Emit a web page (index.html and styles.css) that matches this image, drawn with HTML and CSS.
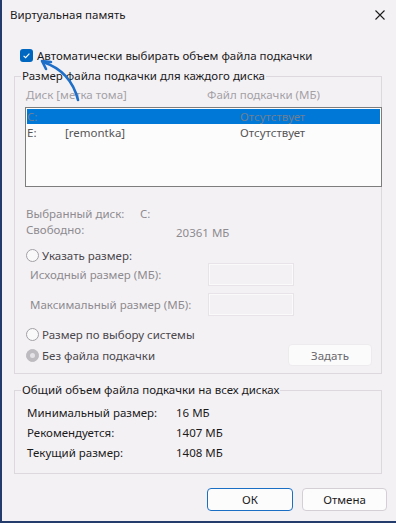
FILE: index.html
```html
<html lang="ru">
<head>
    <meta charset="UTF-8">
    <title>Виртуальная память</title>
    <link rel="stylesheet" href="styles.css">
</head>
<body>

    <div class="window">
        <!-- Title bar -->
        <div class="titlebar">
            <span class="title">Виртуальная память</span>
            <svg class="close" width="10" height="10" viewBox="0 0 10 10">
                <path d="M0.5 0.5 L9.5 9.5 M9.5 0.5 L0.5 9.5" stroke="#1b1b1b" stroke-width="1.1" fill="none"/>
            </svg>
        </div>

        <div class="content">
            <div class="auto-row">
                <span class="checkbox">
                    <svg width="13" height="13" viewBox="0 0 13 13">
                        <path d="M3.6 6.8 L5.6 8.7 L9.4 4.6" stroke="#fff" stroke-width="1.1" fill="none"/>
                    </svg>
                </span>
                <span>Автоматически выбирать объем файла подкачки</span>
            </div>

            <!-- Per-disk group -->
            <fieldset class="group group-disk">
                <legend>Размер файла подкачки для каждого диска</legend>

                <div class="list-head">
                    <span class="col-disk">Диск [метка тома]</span>
                    <span>Файл подкачки (МБ)</span>
                </div>

                <div class="listbox">
                    <div class="list-row selected">
                        <span class="col-letter">C:</span>
                        <span class="col-label"></span>
                        <span>Отсутствует</span>
                    </div>
                    <div class="list-row">
                        <span class="col-letter">E:</span>
                        <span class="col-label">[remontka]</span>
                        <span>Отсутствует</span>
                    </div>
                </div>

                <div class="info-row first">
                    <span class="info-label short">Выбранный диск:</span>
                    <span>C:</span>
                </div>
                <div class="info-row">
                    <span class="info-label">Свободно:</span>
                    <span class="free-value">20361 МБ</span>
                </div>

                <div class="radio-row custom">
                    <span class="radio"></span>
                    <span>Указать размер:</span>
                </div>
                <div class="field-row">
                    <span class="field-label">Исходный размер (МБ):</span>
                    <span class="field"></span>
                </div>
                <div class="field-row second">
                    <span class="field-label">Максимальный размер (МБ):</span>
                    <span class="field"></span>
                </div>

                <div class="radio-row system">
                    <span class="radio"></span>
                    <span>Размер по выбору системы</span>
                </div>
                <div class="radio-row none">
                    <span class="radio checked"></span>
                    <span class="grow">Без файла подкачки</span>
                    <span class="btn btn-set">Задать</span>
                </div>
            </fieldset>

            <!-- Totals group -->
            <fieldset class="group group-total">
                <legend>Общий объем файла подкачки на всех дисках</legend>
                <div class="total-row first">
                    <span class="total-label">Минимальный размер:</span>
                    <span>16 МБ</span>
                </div>
                <div class="total-row">
                    <span class="total-label">Рекомендуется:</span>
                    <span>1407 МБ</span>
                </div>
                <div class="total-row">
                    <span class="total-label">Текущий размер:</span>
                    <span>1408 МБ</span>
                </div>
            </fieldset>

            <div class="buttons">
                <span class="btn btn-ok">ОК</span>
                <span class="btn">Отмена</span>
            </div>
        </div>

        <!-- Annotation arrow drawn over the dialog -->
        <svg class="arrow" width="394" height="120" viewBox="0 0 394 120">
            <path d="M76 100 C72 84 62 69 41 62" stroke="#1f6fc8" stroke-width="2.6" fill="none" stroke-linecap="round"/>
            <path d="M49 62 L40 61 L44 69" stroke="#1f6fc8" stroke-width="2.6" fill="none" stroke-linecap="round" stroke-linejoin="round"/>
        </svg>
    </div>

</body>
</html>
```

FILE: styles.css
```css
/* Basic styling */
body {
    margin: 0;
    background-color: #233c6c;
    font-family: "Noto Sans", Arial, sans-serif;
    font-size: 11.5px;
    color: #1b1b1b;
}

.window {
    position: relative;
    margin-left: 2px;
    width: 394px;
    height: 521px;
    background-color: #f4f1f5;
}

/* Title bar */
.titlebar {
    height: 30px;
    display: flex;
    align-items: center;
    justify-content: space-between;
    padding: 0 11px 0 8px;
}

.title {
    line-height: 16px;
}

.content {
    padding: 0 12px 0 12px;
}

/* Auto checkbox */
.auto-row {
    margin-top: 17px;
    height: 16px;
    display: flex;
    align-items: center;
    gap: 4px;
    padding-left: 6px;
}

.checkbox {
    width: 13px;
    height: 13px;
    border-radius: 3px;
    background-color: #0067c0;
    display: flex;
}

/* Group boxes */
.group {
    margin: 0;
    border: 1px solid #dcd8de;
    padding: 0 9px 7px 11px;
    min-width: 0;
}

.group legend {
    margin-left: -5px;
    padding: 0 1px;
    line-height: 16px;
}

.group-disk {
    margin-top: 5px;
    width: 346px;
}

.list-head {
    margin-top: 3px;
    height: 16px;
    line-height: 16px;
    display: flex;
    color: #a3a1a5;
}

.col-disk {
    width: 181px;
}

.listbox {
    margin: 4px -10px 0 -1px;
    height: 76px;
    border: 1px solid #7d7d7d;
    padding: 1px;
    background-color: #fdfcfd;
}

.list-row {
    height: 15px;
    line-height: 15px;
    display: flex;
    color: #555;
}

.list-row + .list-row {
    height: 16px;
    line-height: 17px;
}

.list-row.selected {
    background-color: #0078d7;
    color: #6f7f93;
}

.col-letter {
    width: 38px;
}

.col-label {
    width: 175px;
}

.info-row {
    height: 16px;
    line-height: 16px;
    display: flex;
    color: #8d8b8f;
}

.info-row.first {
    margin-top: 19px;
}

.info-label {
    width: 150px;
}

.info-label.short {
    width: 114px;
}

.free-value {
    padding-top: 3px;
}

/* Radio buttons */
.radio-row {
    display: flex;
    align-items: center;
    gap: 3px;
    color: #4a484c;
}

.radio-row.custom {
    margin-top: 11px;
    height: 13px;
}

.radio-row.system {
    margin-top: 10px;
    height: 14px;
}

.radio-row.none {
    margin-top: 3px;
    height: 22px;
}

.radio {
    width: 11px;
    height: 11px;
    border: 1px solid #a2a0a4;
    border-radius: 50%;
    background-color: #faf9fa;
    display: flex;
    align-items: center;
    justify-content: center;
}

.radio.checked {
    border-color: #bdbbbf;
    background-color: #bdbbbf;
}

.radio.checked::after {
    content: '';
    width: 5px;
    height: 5px;
    border-radius: 50%;
    background-color: #e4e2e6;
}

.grow {
    flex: 1;
}

/* Size fields */
.field-row {
    height: 25px;
    display: flex;
    align-items: center;
    padding-left: 4px;
    color: #8d8b8f;
}

.field-row.second {
    margin-top: 5px;
}

.field-label {
    width: 178px;
}

.field {
    width: 84px;
    height: 21px;
    border: 1px solid #e7e3e9;
    box-shadow: inset 0 0 0 1px #fbfafb;
    background-color: #f4f1f5;
}

/* Buttons */
.btn {
    box-sizing: border-box;
    display: flex;
    align-items: center;
    justify-content: center;
    width: 85px;
    height: 23px;
    border: 1px solid #d3cfd5;
    border-radius: 4px;
    background-color: #fdfcfd;
    color: #1b1b1b;
}

.btn-set {
    width: 84px;
    height: 22px;
    border-color: #eeebef;
    background-color: #fcfbfc;
    color: #6a686c;
}

.btn-ok {
    width: 86px;
    border-color: #1a6fc4;
}

/* Totals */
.group-total {
    margin-top: 8px;
    width: 346px;
    padding-bottom: 10px;
}

.total-row {
    height: 20px;
    line-height: 20px;
    display: flex;
    padding-left: 1px;
}

.total-row.first {
    margin-top: 5px;
}

.total-label {
    width: 149px;
}

.buttons {
    margin: 14px -3px 0 0;
    display: flex;
    justify-content: flex-end;
    gap: 9px;
}

/* Annotation arrow */
.arrow {
    position: absolute;
    left: 0;
    top: 0;
    pointer-events: none;
}
```
